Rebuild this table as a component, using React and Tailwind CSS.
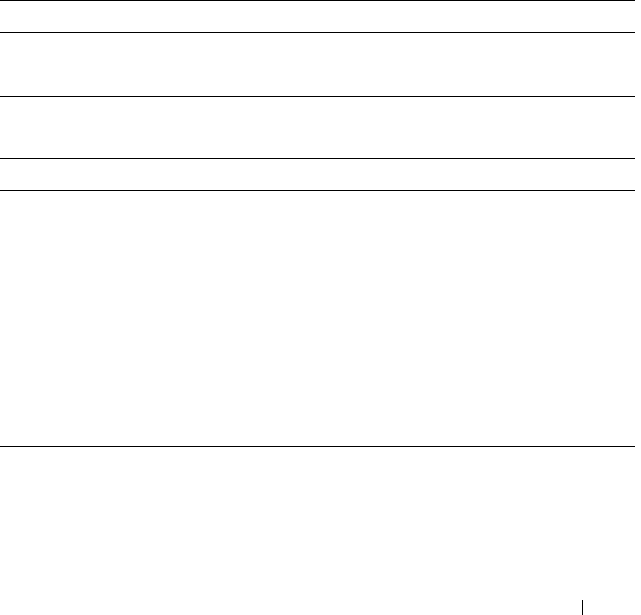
export default function App() {
  const rows = [
    { id: 'r1', h: 'h-[32px]' },
    { id: 'r2', h: 'h-[64px]' },
    { id: 'r3', h: 'h-[62px]' },
    { id: 'r4', h: 'h-[32px]' },
    { id: 'r5', h: 'h-[256px]' },
  ]

  return (
    <div className="w-[641px] h-[615px] bg-white overflow-hidden font-['Liberation_Serif',serif]">
      <div className="w-[635px] flex flex-col">
        {rows.map((row) => (
          <div key={row.id} className={`${row.h} border-t border-black`}></div>
        ))}
        {/* bottom rule, then blank space down to the page footer */}
        <div className="h-[154px] border-t border-black"></div>
      </div>
      {/* footer separator next to the page number slot */}
      <div className="ml-[582px] w-px h-[15px] bg-black"></div>
    </div>
  )
}
